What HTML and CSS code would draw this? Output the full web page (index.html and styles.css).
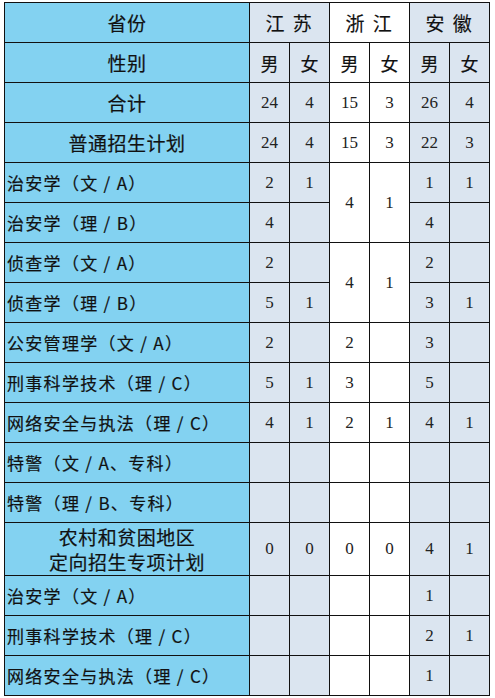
FILE: index.html
```html
<!DOCTYPE html>
<html lang="zh">
<head>
<meta charset="utf-8">
<link rel="stylesheet" href="styles.css">
</head>
<body>
<table class="plan">
  <colgroup>
    <col class="c-label">
    <col class="c-js"><col class="c-js">
    <col class="c-zj"><col class="c-zj">
    <col class="c-ah"><col class="c-ah">
  </colgroup>
  <tr>
    <th class="label center">省份</th>
    <th colspan="2" class="prov js">江 苏</th>
    <th colspan="2" class="prov zj">浙 江</th>
    <th colspan="2" class="prov ah">安 徽</th>
  </tr>
  <tr>
    <th class="label center">性别</th>
    <th class="sex js">男</th><th class="sex js">女</th>
    <th class="sex zj">男</th><th class="sex zj">女</th>
    <th class="sex ah">男</th><th class="sex ah">女</th>
  </tr>
  <tr>
    <td class="label center">合计</td>
    <td class="js">24</td><td class="js">4</td>
    <td class="zj">15</td><td class="zj">3</td>
    <td class="ah">26</td><td class="ah">4</td>
  </tr>
  <tr>
    <td class="label center">普通招生计划</td>
    <td class="js">24</td><td class="js">4</td>
    <td class="zj">15</td><td class="zj">3</td>
    <td class="ah">22</td><td class="ah">3</td>
  </tr>
  <tr>
    <td class="label">治安学（文 / A）</td>
    <td class="js">2</td><td class="js">1</td>
    <td class="zj" rowspan="2">4</td><td class="zj" rowspan="2">1</td>
    <td class="ah">1</td><td class="ah">1</td>
  </tr>
  <tr>
    <td class="label">治安学（理 / B）</td>
    <td class="js">4</td><td class="js"></td>
    <td class="ah">4</td><td class="ah"></td>
  </tr>
  <tr>
    <td class="label">侦查学（文 / A）</td>
    <td class="js">2</td><td class="js"></td>
    <td class="zj" rowspan="2">4</td><td class="zj" rowspan="2">1</td>
    <td class="ah">2</td><td class="ah"></td>
  </tr>
  <tr>
    <td class="label">侦查学（理 / B）</td>
    <td class="js">5</td><td class="js">1</td>
    <td class="ah">3</td><td class="ah">1</td>
  </tr>
  <tr>
    <td class="label">公安管理学（文 / A）</td>
    <td class="js">2</td><td class="js"></td>
    <td class="zj">2</td><td class="zj"></td>
    <td class="ah">3</td><td class="ah"></td>
  </tr>
  <tr>
    <td class="label">刑事科学技术（理 / C）</td>
    <td class="js">5</td><td class="js">1</td>
    <td class="zj">3</td><td class="zj"></td>
    <td class="ah">5</td><td class="ah"></td>
  </tr>
  <tr>
    <td class="label">网络安全与执法（理 / C）</td>
    <td class="js">4</td><td class="js">1</td>
    <td class="zj">2</td><td class="zj">1</td>
    <td class="ah">4</td><td class="ah">1</td>
  </tr>
  <tr>
    <td class="label">特警（文 / A、专科）</td>
    <td class="js"></td><td class="js"></td>
    <td class="zj"></td><td class="zj"></td>
    <td class="ah"></td><td class="ah"></td>
  </tr>
  <tr>
    <td class="label">特警（理 / B、专科）</td>
    <td class="js"></td><td class="js"></td>
    <td class="zj"></td><td class="zj"></td>
    <td class="ah"></td><td class="ah"></td>
  </tr>
  <tr class="tall">
    <td class="label center two">农村和贫困地区<br>定向招生专项计划</td>
    <td class="js">0</td><td class="js">0</td>
    <td class="zj">0</td><td class="zj">0</td>
    <td class="ah">4</td><td class="ah">1</td>
  </tr>
  <tr>
    <td class="label">治安学（文 / A）</td>
    <td class="js"></td><td class="js"></td>
    <td class="zj"></td><td class="zj"></td>
    <td class="ah">1</td><td class="ah"></td>
  </tr>
  <tr>
    <td class="label">刑事科学技术（理 / C）</td>
    <td class="js"></td><td class="js"></td>
    <td class="zj"></td><td class="zj"></td>
    <td class="ah">2</td><td class="ah">1</td>
  </tr>
  <tr>
    <td class="label">网络安全与执法（理 / C）</td>
    <td class="js"></td><td class="js"></td>
    <td class="zj"></td><td class="zj"></td>
    <td class="ah">1</td><td class="ah"></td>
  </tr>
</table>
</body>
</html>
```

FILE: styles.css
```css
html, body {
  margin: 0;
  padding: 0;
  background: #ffffff;
}

body {
  padding: 2px 0 0 4px;
}

.plan {
  border-collapse: collapse;
  table-layout: fixed;
  width: 485px;
}

.c-label { width: 245px; }
.c-js, .c-zj, .c-ah { width: 40px; }

.plan tr { height: 40px; }
.plan tr.tall { height: 53px; }

.plan th,
.plan td {
  border: 1px solid #111;
  padding: 0;
  text-align: center;
  vertical-align: middle;
  font-family: "Liberation Serif", "Times New Roman", serif;
  font-size: 17px;
  font-weight: normal;
  color: #222;
}

.plan .js, .plan .ah { background: #dbe5f0; }
.plan .zj { background: #ffffff; }

.plan .label {
  background: #83d2f1;
  text-align: left;
  padding-left: 2px;
  font-family: "Noto Sans CJK SC", "DejaVu Sans", sans-serif;
  font-size: 17px;
  letter-spacing: 1.3px;
  color: #111;
  white-space: nowrap;
  -webkit-text-stroke: 0.2px #111;
}

.plan .label.center {
  text-align: center;
  padding-left: 0;
  font-size: 19px;
  letter-spacing: 0.5px;
}

.plan .label.two {
  line-height: 25px;
}

.plan .prov {
  font-family: "Noto Sans CJK SC", sans-serif;
  font-size: 19px;
  letter-spacing: 2px;
  color: #111;
  -webkit-text-stroke: 0.15px #111;
}

.plan .sex {
  font-family: "Noto Sans CJK SC", sans-serif;
  font-size: 18px;
  color: #111;
  -webkit-text-stroke: 0.15px #111;
}
```
